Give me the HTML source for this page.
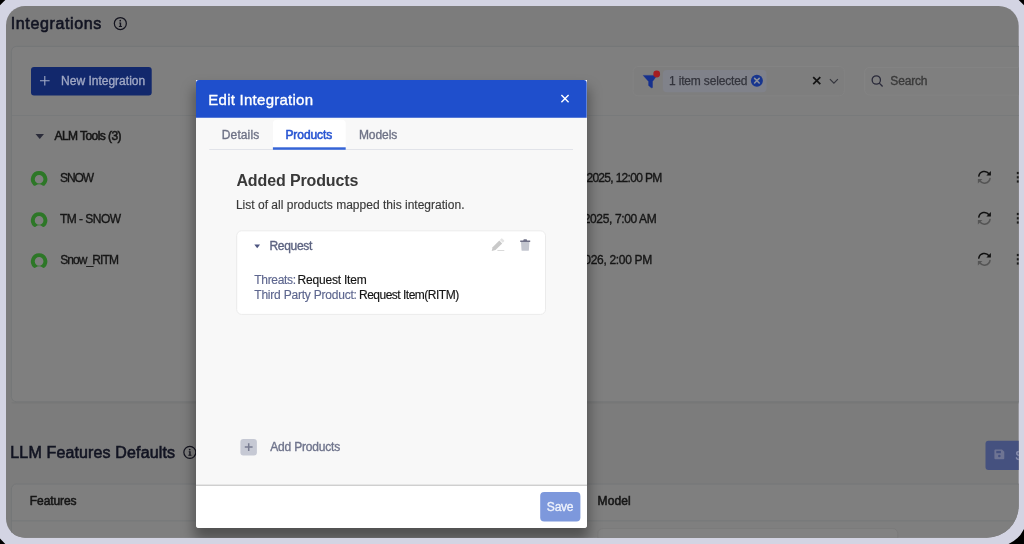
<!DOCTYPE html>
<html><head><meta charset="utf-8">
<style>
*{box-sizing:border-box;margin:0;padding:0}
html,body{width:1024px;height:544px;overflow:hidden;background:#d3d4e3;font-family:"Liberation Sans",sans-serif;}
.abs{position:absolute}
.t{position:absolute;white-space:nowrap;line-height:1}
#bgsvg{position:absolute;left:0;top:0}
#clipr{position:absolute;left:0;top:0;width:1019px;height:544px;overflow:hidden}
#dclip{position:absolute;left:6px;top:6px;width:1013px;height:532px;overflow:hidden}
#dlg{position:absolute;left:190px;top:74px;width:390.500px;height:448px;background:#f8f8f8;border-radius:0 0 3px 3px;box-shadow:0 10px 13px 1.500px rgba(0,0,0,.36)}
#dlgin{position:absolute;left:0;top:0;width:100%;height:100%;overflow:hidden;border-radius:0 0 3px 3px}
#all{position:absolute;left:0;top:0;width:1024px;height:544px;filter:blur(0.350px)}
</style></head><body>
<div id="all">
<svg id="bgsvg" width="1024" height="544" viewBox="0 0 1024 544">
  <defs>
    <clipPath id="pg"><path d="M25 6H998.700A20 20 0 0 1 1018.700 26V505.800A32 32 0 0 1 986.700 537.800H25A19 19 0 0 1 6 518.800V25A19 19 0 0 1 25 6Z"/></clipPath>
  </defs>
  <g clip-path="url(#pg)">
    <rect x="0" y="0" width="1024" height="544" fill="#7c7c7c"/>
    <rect x="11.400" y="402" width="1030" height="1.600" rx="0.8" fill="#747677" opacity="0.6"/><rect x="11.400" y="46.400" width="1030" height="355.300" rx="5" fill="#7f7f7f" stroke="#757778" stroke-width="1"/>
    <rect x="11.900" y="115" width="1020" height="1" fill="#787a7b"/>
    <rect x="11.400" y="484" width="1030" height="80" rx="5" fill="#7f7f7f" stroke="#757778" stroke-width="1"/><rect x="597.800" y="528.500" width="300" height="40" rx="5" fill="#828282" stroke="#7b7b7b" stroke-width="1"/>
    <rect x="11.900" y="520.300" width="1020" height="1" fill="#767879"/>
    <g transform="translate(120.350 23.500)"><circle cx="0" cy="0" r="6" fill="none" stroke="#14141f" stroke-width="1.250"/><circle cx="-0.100" cy="-2.800" r="0.850" fill="#14141f"/><path d="M-1.100 -1h1.900v3.500h0.800v0.900h-3.100v-0.900h0.900v-2.600h-0.500z" fill="#14141f"/></g>
    <g transform="translate(189.850 452.350)"><circle cx="0" cy="0" r="6" fill="none" stroke="#14141f" stroke-width="1.250"/><circle cx="-0.100" cy="-2.800" r="0.850" fill="#14141f"/><path d="M-1.100 -1h1.900v3.500h0.800v0.900h-3.100v-0.900h0.900v-2.600h-0.500z" fill="#14141f"/></g>
    <!-- new integration button -->
    <rect x="31" y="67" width="120.700" height="28.600" rx="3" fill="#12286c"/>
    <path d="M44.800 76v9.600M40 80.800h9.600" stroke="#a3abc6" stroke-width="1.100" fill="none"/>
    <!-- filter -->
    <rect x="633" y="66.500" width="211.300" height="29.300" rx="5" fill="#7e7e7e" stroke="#838383" stroke-width="1"/>
    <path d="M643.200 75.400H657L652.500 81.500V87.300Q652.500 87.800 652 87.800H651.200L648.600 85.500V81.500Z" fill="#16318e" stroke="#16318e" stroke-width="0.400" stroke-linejoin="round"/>
    <circle cx="656.700" cy="74" r="3.400" fill="#a51d20"/>
    <rect x="662.800" y="70" width="103.700" height="22.300" rx="4" fill="#80828a"/>
    <circle cx="756.900" cy="80.700" r="6" fill="#17358f"/>
    <path d="M754.600 78.400l4.600 4.600M759.200 78.400l-4.600 4.600" stroke="#8a8f9c" stroke-width="1.600" stroke-linecap="round"/>
    <path d="M813.200 77.100l7.100 7.100M820.300 77.100l-7.100 7.100" stroke="#141414" stroke-width="1.700"/>
    <path d="M829.900 79.200l4 4 4-4" stroke="#33343c" stroke-width="1.100" fill="none"/>
    <!-- search -->
    <rect x="864.700" y="67.400" width="180" height="27.700" rx="5" fill="#7f7f7f" stroke="#848484" stroke-width="1"/>
    <circle cx="876.300" cy="80" r="4.150" fill="none" stroke="#2a2a3a" stroke-width="1.300"/>
    <path d="M879.300 83.100l3.300 3.400" stroke="#2a2a3a" stroke-width="1.300"/>
    <!-- group caret -->
    <path d="M35.500 134.100h8.500l-4.250 4.900z" fill="#2b2c3a"/>
    <path transform="translate(39.100 178.600)" d="M0 -7.500a8.200 8.200 0 0 0-5.500 14.300c.55.500 1.400.550 2 .1a5.700 5.700 0 0 1 7 0c.6.450 1.450.400 2-.1a8.200 8.200 0 0 0-5.500-14.300zm0 12.500a4.350 4.350 0 1 1 0-8.700 4.350 4.350 0 0 1 0 8.700z" fill="#2d7727"/>
    <path transform="translate(39.100 219.800)" d="M0 -7.500a8.200 8.200 0 0 0-5.500 14.300c.55.500 1.400.550 2 .1a5.700 5.700 0 0 1 7 0c.6.450 1.450.400 2-.1a8.200 8.200 0 0 0-5.500-14.300zm0 12.500a4.350 4.350 0 1 1 0-8.700 4.350 4.350 0 0 1 0 8.700z" fill="#2d7727"/>
    <path transform="translate(39.100 260.700)" d="M0 -7.500a8.200 8.200 0 0 0-5.500 14.300c.55.500 1.400.550 2 .1a5.700 5.700 0 0 1 7 0c.6.450 1.450.400 2-.1a8.200 8.200 0 0 0-5.500-14.300zm0 12.500a4.350 4.350 0 1 1 0-8.700 4.350 4.350 0 0 1 0 8.700z" fill="#2d7727"/>
    <g transform="translate(984.400 177.300)" fill="none"><path d="M-5.600 -1.200a5.700 5.700 0 0 1 10.200-2.300" stroke="#111" stroke-width="1.500" stroke-linecap="round"/>
      <path d="M6.500 -6.200v4.500h-4.500z" fill="#111"/>
      <path d="M5.600 1.200a5.700 5.700 0 0 1-10.200 2.300" stroke="#555" stroke-width="1.500" stroke-linecap="round"/>
      <path d="M-6.500 6.200v-4.500h4.500z" fill="#555"/></g>
    <g transform="translate(984.400 218.300)" fill="none"><path d="M-5.600 -1.200a5.700 5.700 0 0 1 10.200-2.300" stroke="#111" stroke-width="1.500" stroke-linecap="round"/>
      <path d="M6.500 -6.200v4.500h-4.500z" fill="#111"/>
      <path d="M5.600 1.200a5.700 5.700 0 0 1-10.200 2.300" stroke="#555" stroke-width="1.500" stroke-linecap="round"/>
      <path d="M-6.500 6.200v-4.500h4.500z" fill="#555"/></g>
    <g transform="translate(984.400 259.300)" fill="none"><path d="M-5.600 -1.200a5.700 5.700 0 0 1 10.200-2.300" stroke="#111" stroke-width="1.500" stroke-linecap="round"/>
      <path d="M6.500 -6.200v4.500h-4.500z" fill="#111"/>
      <path d="M5.600 1.200a5.700 5.700 0 0 1-10.200 2.300" stroke="#555" stroke-width="1.500" stroke-linecap="round"/>
      <path d="M-6.500 6.200v-4.500h4.500z" fill="#555"/></g>
    <g transform="translate(1017.900 177.300)" fill="#1c1c1c"><rect x="-1.100" y="-5.400" width="2.200" height="2.200"/><rect x="-1.100" y="-1.100" width="2.200" height="2.200"/><rect x="-1.100" y="3.100" width="2.200" height="2.200"/></g>
    <g transform="translate(1017.900 218.300)" fill="#1c1c1c"><rect x="-1.100" y="-5.400" width="2.200" height="2.200"/><rect x="-1.100" y="-1.100" width="2.200" height="2.200"/><rect x="-1.100" y="3.100" width="2.200" height="2.200"/></g>
    <g transform="translate(1017.900 259.300)" fill="#1c1c1c"><rect x="-1.100" y="-5.400" width="2.200" height="2.200"/><rect x="-1.100" y="-1.100" width="2.200" height="2.200"/><rect x="-1.100" y="3.100" width="2.200" height="2.200"/></g>
    <!-- disabled save -->
    <rect x="985.500" y="440.800" width="50" height="29.200" rx="3" fill="#45517f"/>
    <g transform="translate(994.400 449.400)"><path d="M0 1a1 1 0 0 1 1-1h6.600l2.300 2.300v6.500a1 1 0 0 1-1 1h-7.900a1 1 0 0 1-1-1z" fill="#6e7493"/><rect x="1.900" y="1.500" width="4.600" height="2.300" fill="#45517f"/><circle cx="4.950" cy="6.600" r="1.300" fill="#45517f"/></g>
  </g>
</svg>
<div id="clipr">
  <div class="t" style="left:10.70px;top:16.00px;font-size:16px;font-weight:400;letter-spacing:0.641px;-webkit-text-stroke:0.6px;color:#121422;">Integrations</div>
  <div class="t" style="left:61.05px;top:75.00px;font-size:12px;font-weight:400;letter-spacing:0.004px;-webkit-text-stroke:0.35px;color:#a0a8c4;">New Integration</div>
  <div class="t" style="left:668.95px;top:75.00px;font-size:12px;font-weight:400;letter-spacing:-0.157px;-webkit-text-stroke:0.25px;color:#33343c;">1 item selected</div>
  <div class="t" style="left:890.35px;top:75.00px;font-size:12px;font-weight:400;letter-spacing:-0.17px;-webkit-text-stroke:0.35px;color:#3a3a3a;">Search</div>
  <div class="t" style="left:54.50px;top:130.00px;font-size:12px;font-weight:400;letter-spacing:-0.562px;-webkit-text-stroke:0.55px;color:#161616;">ALM Tools (3)</div>
  <div class="t" style="left:60.05px;top:172.00px;font-size:12px;font-weight:400;letter-spacing:-1.083px;-webkit-text-stroke:0.35px;color:#161616;">SNOW</div>
  <div class="t" style="left:60.00px;top:213.00px;font-size:12px;font-weight:400;letter-spacing:-0.525px;-webkit-text-stroke:0.35px;color:#161616;">TM - SNOW</div>
  <div class="t" style="left:60.15px;top:254.00px;font-size:12px;font-weight:400;letter-spacing:-0.9px;-webkit-text-stroke:0.35px;color:#161616;">Snow_RITM</div>
  <div class="t" style="right:357.49px;top:172.00px;font-size:12px;letter-spacing:-0.686px;-webkit-text-stroke:0.35px;color:#161616">Dec 19, 2025, 12:00 PM</div>
  <div class="t" style="right:362.67px;top:213.00px;font-size:12px;letter-spacing:-0.367px;-webkit-text-stroke:0.35px;color:#161616">Dec 19, 2025, 7:00 AM</div>
  <div class="t" style="right:367.01px;top:254.00px;font-size:12px;letter-spacing:-0.308px;-webkit-text-stroke:0.35px;color:#161616">Jan 19, 2026, 2:00 PM</div>
  <div class="t" style="left:10.30px;top:445.00px;font-size:16px;font-weight:400;letter-spacing:0.147px;-webkit-text-stroke:0.6px;color:#121422;">LLM Features Defaults</div>
  <div class="t" style="left:1015.300px;top:450px;font-size:12px;-webkit-text-stroke:0.35px;color:#8a90b0">Save</div>
  <div class="t" style="left:29.85px;top:495.00px;font-size:12px;font-weight:400;letter-spacing:-0.086px;-webkit-text-stroke:0.55px;color:#161616;">Features</div>
  <div class="t" style="left:597.55px;top:495.00px;font-size:12px;font-weight:400;letter-spacing:0.125px;-webkit-text-stroke:0.55px;color:#161616;">Model</div>
</div>

<div id="dclip"><div id="dlg"><div id="dlgin">
  <svg class="abs" style="left:0;top:0" width="391" height="448" viewBox="196 80 391 448">
    <rect x="196" y="80" width="391" height="10" fill="#fff"/><path d="M196 117.800V83a3 3 0 0 1 3-3H583.700a3 3 0 0 1 3 3V117.800Z" fill="#1f4fcc"/>
    <path d="M561.400 95l7.200 7.200M568.600 95l-7.200 7.200" stroke="#fff" stroke-width="1.400"/>
    <rect x="209.300" y="149" width="363.700" height="1" fill="#e1e3e9"/>
    <path d="M272.900 149.800V123.700a4 4 0 0 1 4-4H341.700a4 4 0 0 1 4 4V149.800Z" fill="#fff"/>
    <rect x="272.900" y="147.300" width="72.800" height="2.500" fill="#3564d6"/>
    <rect x="236.700" y="230.800" width="308.800" height="83.600" rx="5" fill="#fff" stroke="#ebebeb" stroke-width="1"/>
    <path d="M254.300 244.400h5.800l-2.900 3.800z" fill="#4d5580"/>
    <!-- pencil -->
    <path d="M491.700 250.900l.9-3.700 6.700-6.700 2.900 2.900-6.700 6.700z" fill="#c9c9c9"/>
    <path d="M499.900 239.900l1.200-1.200a.9.900 0 0 1 1.300 0l1.600 1.600a.9.900 0 0 1 0 1.300l-1.200 1.200z" fill="#e4e4e4"/>
    <rect x="497.400" y="250" width="6.900" height="0.900" fill="#d6d6d6"/>
    <!-- trash -->
    <path d="M520.200 240.400h3l.6-1.200h2.800l.6 1.200h3v1.700h-10z" fill="#6f7187"/>
    <path d="M521 242.100h8.400l-.5 7.800a.9.900 0 0 1-.9.900h-5.600a.9.900 0 0 1-.9-.9z" fill="#c3c6cf"/>
    <!-- add -->
    <rect x="240.400" y="438.900" width="16.500" height="16.700" rx="3" fill="#c6c9d4"/>
    <path d="M248.700 443.200v7.800M244.800 447.100h7.800" stroke="#777b90" stroke-width="1.500"/>
    <!-- footer -->
    <rect x="196" y="485.400" width="391" height="50" fill="#fff"/>
    <rect x="196" y="484.700" width="391" height="1" fill="#bdbdbd"/>
    <rect x="540.200" y="492.100" width="40.200" height="29.500" rx="4" fill="#7d98dc"/>
  </svg>
  <div class="t" style="left:12.30px;top:12.00px;font-size:15px;font-weight:400;letter-spacing:0.257px;-webkit-text-stroke:0.35px;color:#fff;">Edit Integration</div>
  <div class="t" style="left:25.85px;top:49.00px;font-size:12px;font-weight:400;letter-spacing:0.108px;-webkit-text-stroke:0.35px;color:#6e7286;">Details</div>
  <div class="t" style="left:89.45px;top:49.00px;font-size:12px;font-weight:400;letter-spacing:-0.071px;-webkit-text-stroke:0.55px;color:#2855d2;">Products</div>
  <div class="t" style="left:162.95px;top:49.00px;font-size:12px;font-weight:400;letter-spacing:-0.07px;-webkit-text-stroke:0.35px;color:#6e7286;">Models</div>
  <div class="t" style="left:40.45px;top:93.00px;font-size:16px;font-weight:700;letter-spacing:-0.127px;-webkit-text-stroke:0px;color:#393939;">Added Products</div>
  <div class="t" style="left:39.95px;top:119.00px;font-size:12px;font-weight:400;letter-spacing:0.009px;-webkit-text-stroke:0.15px;color:#3a3a3a;">List of all products mapped this integration.</div>
  <div class="t" style="left:73.45px;top:160.00px;font-size:12px;font-weight:400;letter-spacing:-0.308px;-webkit-text-stroke:0.35px;color:#5c6380;">Request</div>
  <div class="t" style="left:58.30px;top:194.00px;font-size:12px;font-weight:400;letter-spacing:-0.329px;-webkit-text-stroke:0.15px;color:#5e678f;">Threats:</div>
  <div class="t" style="left:101.55px;top:194.00px;font-size:12px;font-weight:400;letter-spacing:-0.2px;-webkit-text-stroke:0.15px;color:#151515;">Request Item</div>
  <div class="t" style="left:58.30px;top:209.00px;font-size:12px;font-weight:400;letter-spacing:-0.213px;-webkit-text-stroke:0.15px;color:#5e678f;">Third Party Product:</div>
  <div class="t" style="left:163.00px;top:209.00px;font-size:12px;font-weight:400;letter-spacing:-0.503px;-webkit-text-stroke:0.15px;color:#151515;">Request Item(RITM)</div>
  <div class="t" style="left:74.25px;top:361.00px;font-size:12px;font-weight:400;letter-spacing:-0.186px;-webkit-text-stroke:0.35px;color:#6f748c;">Add Products</div>
  <div class="t" style="left:350.85px;top:421.00px;font-size:12px;font-weight:400;letter-spacing:-0.217px;-webkit-text-stroke:0.35px;color:#eef2fc;">Save</div>
</div></div></div>
</div>
<svg class="abs" style="left:0;top:0" width="1024" height="544" viewBox="0 0 1024 544"><path d="M0 0H5.300L0 5.200Z" fill="#000"/><path d="M1024 0h-5.300l5.300 5.200Z" fill="#000"/><path d="M0 544v-5.500l5.300 5.500Z" fill="#000"/><path d="M1008.500 544H1024V529Q1019.150 539.300 1008.500 544Z" fill="#000"/></svg>
</body></html>
